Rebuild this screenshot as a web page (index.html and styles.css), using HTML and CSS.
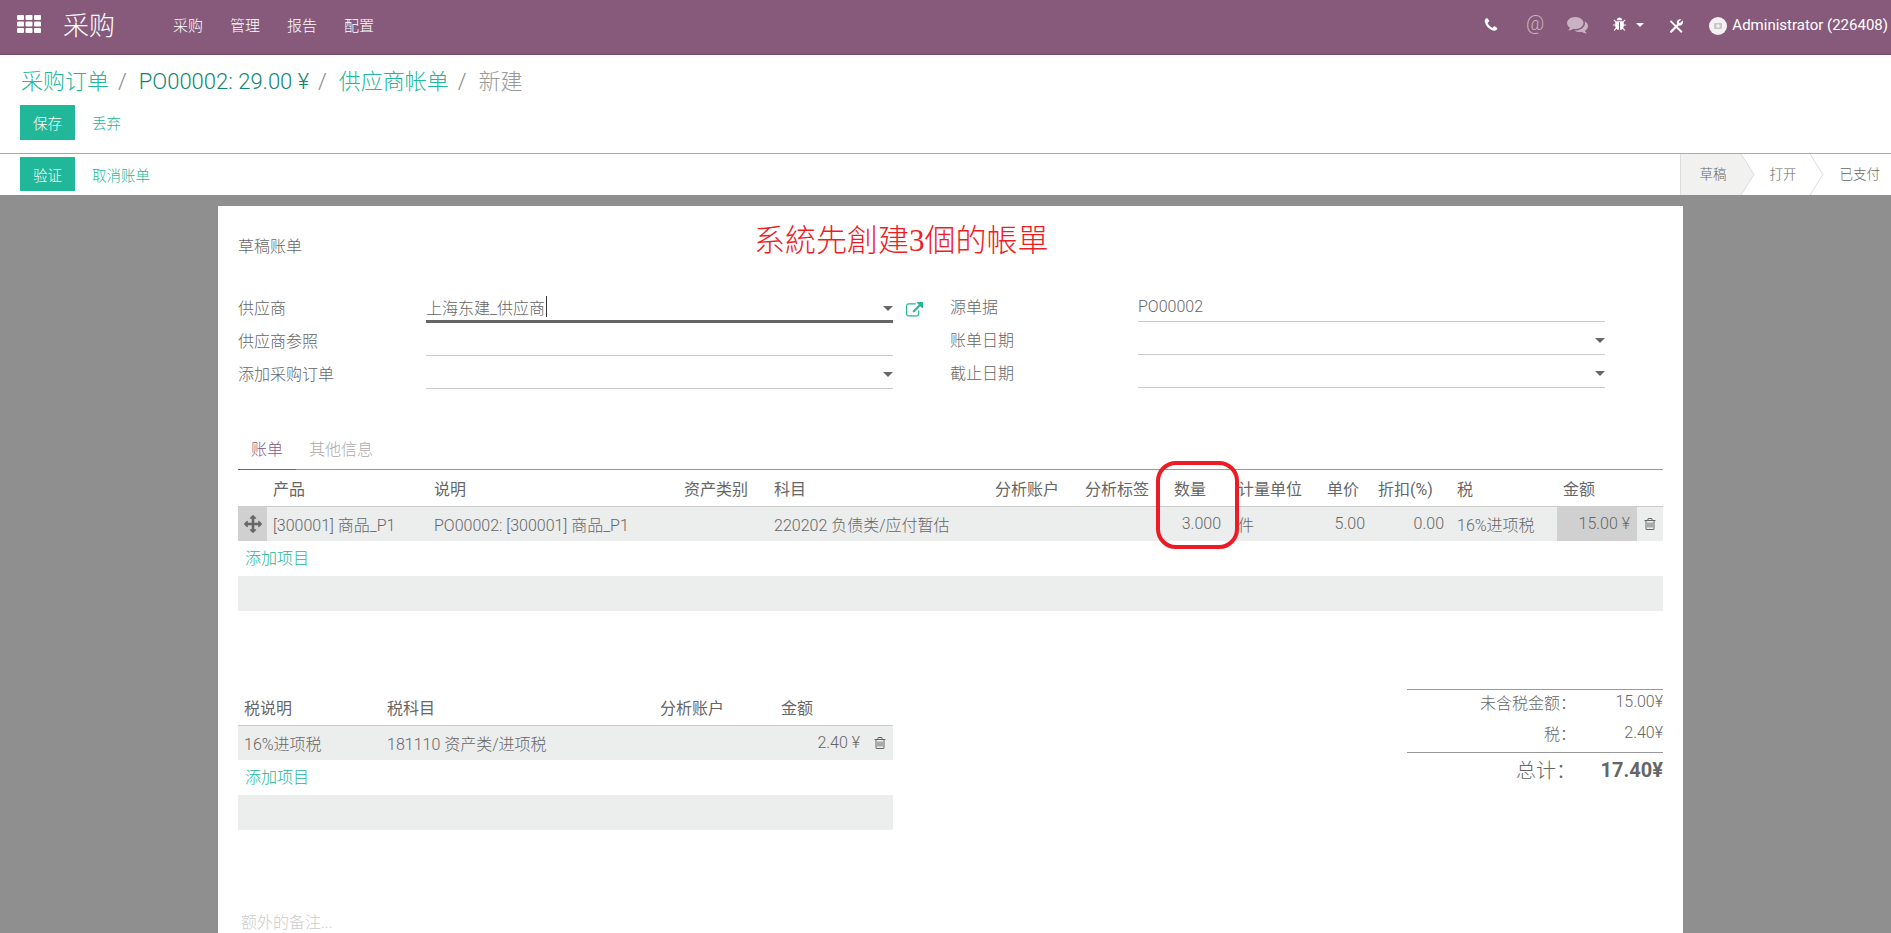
FILE: index.html
```html
<!DOCTYPE html>
<html lang="zh-CN">
<head>
<meta charset="utf-8">
<title>采购</title>
<link rel="stylesheet" href="styles.css">
</head>
<body>
<svg class="sprite" aria-hidden="true">
  <symbol id="i-phone" viewBox="0 0 1792 1792"><path d="M1600 1240q0 27-10 70.5t-21 68.5q-21 50-122 106-94 51-186 51-27 0-53-3.5t-57.5-12.5-47-14.5-55.5-20.5-49-18q-98-35-175-83-127-79-264-216t-216-264q-48-77-83-175-3-9-18-49t-20.5-55.5-14.5-47-12.5-57.5-3.5-53q0-92 51-186 56-101 106-122 25-11 68.5-21t70.5-10q14 0 21 3 18 6 53 76 11 19 30 54t35 63.5 31 53.5q3 4 17.5 25t21.5 35.5 7 28.5q0 20-28.5 50t-62 55-62 53-28.5 46q0 9 5 22.5t8.5 20.5 14 24 11.5 19q76 137 174 235t235 174q2 1 19 11.5t24 14 20.5 8.5 22.5 5q18 0 46-28.5t53-62 55-62 50-28.5q14 0 28.5 7t35.5 21.5 25 17.5q25 15 53.5 31t63.5 35 54 30q70 35 76 53 3 7 3 21z"/></symbol>
  <symbol id="i-comments" viewBox="0 0 1792 1792"><path d="M1408 768q0 139-94 257t-256.500 186.500-353.500 68.500q-86 0-176-16-124 88-278 128-36 9-86 16h-3q-11 0-20.500-8t-11.500-21q-1-3-1-6.500t.5-6.500 2-6l2.500-5 3.500-5.500 4-5 4.500-5 4-4.500q5-6 23-25t26-29.500 22.500-29 25-38.500 20.500-44q-124-72-195-177t-71-224q0-139 94-257t256.500-186.500 353.500-68.500 353.500 68.500 256.500 186.500 94 257zm384 256q0 120-71 224.500t-195 176.500q10 24 20.500 44t25 38.500 22.500 29 26 29.500 23 25q1 1 4 4.500t4.500 5 4 5 3.500 5.500l2.500 5 2 6 .5 6.500-1 6.500q-3 14-13 22t-22 7q-50-7-86-16-154-40-278-128-90 16-176 16-271 0-472-132 58 4 88 4 161 0 309-45t264-129q125-92 192-212t67-254q0-77-23-152 129 71 204 178t75 230z"/></symbol>
  <symbol id="i-bug" viewBox="0 0 1792 1792"><path d="M1696 960q0 26-19 45t-45 19h-224q0 171-67 290l208 209q19 19 19 45t-19 45q-18 19-45 19t-45-19l-198-197q-5 5-15 13t-42 28.500-65 36.500-82 29-97 13v-896h-128v896q-51 0-101.500-13.500t-87-33-66-39-43.500-32.500l-15-14-183 207q-20 21-48 21-24 0-43-16-19-18-20.500-44.500t15.500-46.500l202-227q-58-114-58-274h-224q-26 0-45-19t-19-45 19-45 45-19h224v-294l-173-173q-19-19-19-45t19-45 45-19 45 19l173 173h844l173-173q19-19 45-19t45 19 19 45-19 45l-173 173v294h224q26 0 45 19t19 45zm-480-576h-640q0-133 93.500-226.500t226.500-93.500 226.500 93.500 93.500 226.500z"/></symbol>
  <symbol id="i-external" viewBox="0 0 1792 1792"><path d="M1408 928v320q0 119-84.500 203.500t-203.500 84.500h-832q-119 0-203.500-84.500t-84.500-203.500v-832q0-119 84.500-203.500t203.500-84.500h704q14 0 23 9t9 23v64q0 14-9 23t-23 9h-704q-66 0-113 47t-47 113v832q0 66 47 113t113 47h832q66 0 113-47t47-113v-320q0-14 9-23t23-9h64q14 0 23 9t9 23zm384-864v512q0 26-19 45t-45 19-45-19l-176-176-652 652q-10 10-23 10t-23-10l-114-114q-10-10-10-23t10-23l652-652-176-176q-19-19-19-45t19-45 45-19h512q26 0 45 19t19 45z"/></symbol>
  <symbol id="i-arrows" viewBox="0 0 1792 1792"><path d="M1792 896q0 26-19 45l-256 256q-19 19-45 19t-45-19-19-45v-128h-384v384h128q26 0 45 19t19 45-19 45l-256 256q-19 19-45 19t-45-19l-256-256q-19-19-19-45t19-45 45-19h128v-384h-384v128q0 26-19 45t-45 19-45-19l-256-256q-19-19-19-45t19-45l256-256q19-19 45-19t45 19 19 45v128h384v-384h-128q-26 0-45-19t-19-45 19-45l256-256q19-19 45-19t45 19l256 256q19 19 19 45t-19 45-45 19h-128v384h384v-128q0-26 19-45t45-19 45 19l256 256q19 19 19 45z"/></symbol>
  <symbol id="i-trash" viewBox="0 0 1792 1792"><path d="M704 736v576q0 14-9 23t-23 9h-64q-14 0-23-9t-9-23v-576q0-14 9-23t23-9h64q14 0 23 9t9 23zm256 0v576q0 14-9 23t-23 9h-64q-14 0-23-9t-9-23v-576q0-14 9-23t23-9h64q14 0 23 9t9 23zm256 0v576q0 14-9 23t-23 9h-64q-14 0-23-9t-9-23v-576q0-14 9-23t23-9h64q14 0 23 9t9 23zm128 724v-948h-896v948q0 22 7 40.500t14.500 27 10.500 8.500h832q3 0 10.500-8.500t14.500-27 7-40.500zm-672-1076h448l-48-117q-7-9-17-11h-317q-10 2-17 11zm928 32v64q0 14-9 23t-23 9h-96v948q0 83-47 143.500t-113 60.500h-832q-66 0-113-58.500t-47-141.500v-952h-96q-14 0-23-9t-9-23v-64q0-14 9-23t23-9h309l70-167q15-37 54-63t79-26h320q40 0 79 26t54 63l70 167h309q14 0 23 9t9 23z"/></symbol>
</svg>

<header class="nav">
  <svg class="apps" viewBox="0 0 24 18"><g fill="#fff"><rect width="7" height="5" rx="1"/><rect x="8.500" width="7" height="5" rx="1"/><rect x="17" width="7" height="5" rx="1"/><rect y="6.500" width="7" height="5" rx="1"/><rect x="8.500" y="6.500" width="7" height="5" rx="1"/><rect x="17" y="6.500" width="7" height="5" rx="1"/><rect y="13" width="7" height="5" rx="1"/><rect x="8.500" y="13" width="7" height="5" rx="1"/><rect x="17" y="13" width="7" height="5" rx="1"/></g></svg>
  <span class="brand">采购</span>
  <nav class="menu"><a>采购</a><a>管理</a><a>报告</a><a>配置</a></nav>
  <div class="systray">
    <svg class="ico-phone"><use href="#i-phone"/></svg>
    <span class="at">@</span>
    <svg class="ico-comments"><use href="#i-comments"/></svg>
    <svg class="ico-bug"><use href="#i-bug"/></svg>
    <span class="caret-white"></span>
    <svg class="ico-tools" viewBox="0 0 16 16"><path d="M2.200 1.200 14.400 13.200 13 14.800 .9 2.700z" fill="#fff"/><path d="M14.600 1.400 11.800 4.200 10.800 3.900 10.600 2.800 13 .6C11 -.2 8.700 1 8.400 3.200 8.300 4 8.500 4.700 8.800 5.400L1.200 12.800C.4 13.600 1.900 15.400 3 14.500L10.500 6.900C13.200 7.900 16.200 4.800 14.600 1.400z" fill="#fff"/></svg>
    <svg class="avatar" viewBox="0 0 18 18"><circle cx="9" cy="9" r="9" fill="#f3f1f2"/><rect x="5" y="6" width="8" height="6" rx="1" fill="#c9c6c8"/><circle cx="9" cy="9" r="1.800" fill="#f3f1f2"/></svg>
    <span class="user">Administrator (226408)</span>
  </div>
</header>

<section class="panel">
  <ol class="crumbs">
    <li class="link">采购订单</li><li class="sep">/</li>
    <li class="link-dark">PO00002: 29.00 ¥</li><li class="sep">/</li>
    <li class="link">供应商帐单</li><li class="sep">/</li>
    <li class="current">新建</li>
  </ol>
  <div class="actions"><button class="btn">保存</button><a class="btn-link">丢弃</a></div>
</section>

<section class="statusbar">
  <div class="actions"><button class="btn btn-status">验证</button><a class="btn-link">取消账单</a></div>
  <div class="steps">
    <span class="step step-active">草稿</span>
    <svg class="chev" viewBox="0 0 13 41"><path d="M0 0 13 20.500 0 41z" fill="#f1f1f0"/><path d="M0 0 13 20.500 0 41" fill="none" stroke="#ddd"/></svg>
    <span class="step step-open">打开</span>
    <svg class="chev" viewBox="0 0 13 41"><path d="M0 0 13 20.500 0 41" fill="none" stroke="#ddd"/></svg>
    <span class="step step-paid">已支付</span>
  </div>
</section>

<main class="content">
  <article class="sheet">
    <div class="note-red">系統先創建3個的帳單</div>
    <div class="mark-red"></div>

    <div class="doc-title">草稿账单</div>

    <div class="form">
      <div class="group group-left">
        <div class="row"><label>供应商</label>
          <div class="field field-focus"><span>上海东建_供应商</span><i class="cursor"></i><b class="caret"></b></div>
          <svg class="ico-ext"><use href="#i-external"/></svg>
        </div>
        <div class="row"><label>供应商参照</label><div class="field"></div></div>
        <div class="row"><label>添加采购订单</label><div class="field"><b class="caret"></b></div></div>
      </div>
      <div class="group">
        <div class="row"><label>源单据</label><div class="field"><span>PO00002</span></div></div>
        <div class="row"><label>账单日期</label><div class="field"><b class="caret"></b></div></div>
        <div class="row"><label>截止日期</label><div class="field"><b class="caret"></b></div></div>
      </div>
    </div>

    <div class="tabs"><a class="tab tab-active">账单</a><a class="tab">其他信息</a></div>

    <table class="list">
      <colgroup>
        <col class="c29"><col class="c161"><col class="c250"><col class="c90"><col class="c221"><col class="c90"><col class="c89"><col class="c60"><col class="c93"><col class="c51"><col class="c79"><col class="c106"><col class="c80"><col class="c26">
      </colgroup>
      <thead><tr><th></th><th>产品</th><th>说明</th><th>资产类别</th><th>科目</th><th>分析账户</th><th>分析标签</th><th>数量</th><th class="uom">计量单位</th><th>单价</th><th>折扣(%)</th><th>税</th><th>金额</th><th></th></tr></thead>
      <tbody><tr>
        <td class="handle"><svg class="ico-arrows"><use href="#i-arrows"/></svg></td>
        <td>[300001] 商品_P1</td>
        <td>PO00002: [300001] 商品_P1</td>
        <td></td>
        <td>220202 负债类/应付暂估</td>
        <td></td><td></td>
        <td class="num">3.000</td>
        <td class="uom">件</td>
        <td class="num">5.00</td>
        <td class="num">0.00</td>
        <td>16%进项税</td>
        <td class="num total-cell">15.00 ¥</td>
        <td class="del"><svg class="ico-trash"><use href="#i-trash"/></svg></td>
      </tr></tbody>
    </table>
    <a class="add-line">添加项目</a>
    <div class="filler"></div>

    <div class="bottom">
      <div class="tax">
        <table class="list">
          <colgroup><col class="c143"><col class="c273"><col class="c121"><col class="c92"><col class="c26"></colgroup>
          <thead><tr><th>税说明</th><th>税科目</th><th>分析账户</th><th>金额</th><th></th></tr></thead>
          <tbody><tr>
            <td>16%进项税</td><td>181110 资产类/进项税</td><td></td>
            <td class="num">2.40 ¥</td>
            <td class="del"><svg class="ico-trash"><use href="#i-trash"/></svg></td>
          </tr></tbody>
        </table>
        <a class="add-line">添加项目</a>
        <div class="filler"></div>
      </div>
      <div class="totals">
        <div class="t-row"><span>未含税金额<span class="colon">：</span></span><span class="t-val">15.00¥</span></div>
        <div class="t-row"><span>税<span class="colon">：</span></span><span class="t-val">2.40¥</span></div>
        <div class="t-row t-grand"><span>总计<span class="colon">：</span></span><span class="t-val">17.40¥</span></div>
      </div>
    </div>

    <div class="notes">额外的备注...</div>
  </article>
</main>
</body>
</html>
```

FILE: styles.css
```css
* { box-sizing: border-box; }
html, body { height: 100%; }
body {
  margin: 0;
  height: 933px;
  overflow: hidden;
  display: flex;
  flex-direction: column;
  background: #fff;
  color: #666;
  font-family: Roboto, "Noto Sans CJK SC", sans-serif;
  font-size: 16px;
  font-weight: 300;
}
.sprite { position: absolute; width: 0; height: 0; }
svg { display: block; fill: currentColor; flex: none; }

/* top navigation */
.nav {
  flex: none;
  height: 55px;
  display: flex;
  align-items: center;
  background: #875a7b;
  border-bottom: 1px solid #6d4a64;
  color: #fff;
  padding-left: 17px;
}
.apps { width: 24px; height: 18px; margin-top: -6px; }
.brand { font-size: 26px; line-height: 30px; margin-left: 22px; margin-top: -3px; }
.menu { display: flex; gap: 27px; margin-left: 58px; font-size: 15px; margin-top: -5px; }
.systray { display: flex; align-items: center; margin-left: auto; padding-right: 3px; margin-top: -5px; }
.ico-phone { width: 16px; height: 16px; margin-right: 27px; }
.at { font-size: 20px; line-height: 22px; color: #c9b3c3; margin-top: -4px; margin-right: 23px; }
.ico-comments { width: 21px; height: 21px; color: #c9b3c3; margin-right: 24px; }
.ico-bug { width: 15px; height: 15px; margin-right: 9px; }
.caret-white { width: 0; height: 0; border: 4.5px solid transparent; border-top-color: #fff; border-bottom: 0; margin-right: 25px; }
.ico-tools { width: 15px; height: 15px; margin-right: 25px; margin-top: 3px; }
.avatar { width: 18px; height: 18px; margin-right: 5px; margin-top: 3px; }
.user { font-size: 15px; font-weight: 400; }

/* control panel */
.panel {
  flex: none;
  height: 99px;
  padding: 13px 0 0 20px;
  border-bottom: 1px solid #aaa;
}
.crumbs {
  display: flex;
  list-style: none;
  margin: 0;
  padding: 0 0 0 1px;
  font-size: 22px;
  line-height: 28px;
}
.link { color: #21b799; }
.link-dark { color: #0f8672; }
.current { color: #999; }
.sep { color: #888; margin: 0 12px 0 9px; }
.actions { display: flex; align-items: center; margin-top: 9px; }
.btn {
  width: 55px;
  height: 35px;
  padding: 0;
  border: 0;
  background: #21b799;
  color: #fff;
  font: inherit;
  font-size: 14.500px;
}
.btn-link { color: #21b799; font-size: 14.500px; margin-left: 17px; }

/* status bar */
.statusbar {
  flex: none;
  height: 41px;
  display: flex;
  justify-content: space-between;
  padding-left: 20px;
}
.statusbar .actions { margin-top: 3px; align-self: flex-start; }
.btn-status { height: 34px; }
.steps { display: flex; font-size: 13.500px; line-height: 41px; }
.step { display: block; }
.step-active { background: #f1f1f0; border-left: 1px solid #ddd; padding: 0 14px 0 19px; }
.step-open { padding: 0 13px 0 16px; }
.step-paid { padding: 0 11px 0 17px; }
.chev { width: 13px; height: 41px; overflow: visible; }

/* sheet */
.content {
  flex: 1;
  min-height: 0;
  overflow: hidden;
  background: #8f8f8f;
  padding: 11px 0 0 218px;
}
.sheet {
  position: relative;
  width: 1465px;
  height: 800px;
  background: #fff;
  padding: 29px 20px 0;
}
.note-red {
  position: absolute;
  left: 536px;
  top: 15px;
  font-family: "Liberation Serif", "Noto Sans CJK TC", serif;
  font-size: 31px;
  line-height: 40px;
  color: #f01c24;
  white-space: nowrap;
}
.mark-red {
  position: absolute;
  left: 938px;
  top: 255px;
  width: 83px;
  height: 88px;
  border: 4px solid #ed1c24;
  border-radius: 20px;
}
.doc-title { line-height: 24px; margin-bottom: 30px; }

/* form */
.form { display: flex; gap: 57px; height: 100px; }
.group { width: 655px; }
.group-left { padding-top: 1px; }
.row { display: flex; align-items: center; height: 33px; position: relative; }
.row label { width: 188px; flex: none; }
.field {
  position: relative;
  flex: 1;
  height: 33px;
  display: flex;
  align-items: center;
  padding-top: 3px;
  border-bottom: 1px solid #ccc;
}
.field-focus { border-bottom: 3px solid #666; }
.cursor { width: 1px; height: 21px; background: #333; margin-left: 1px; }
.caret {
  position: absolute;
  right: 0;
  top: 16px;
  border: 5px solid transparent;
  border-top-color: #666;
  border-bottom: 0;
}
.ico-ext { position: absolute; left: 668px; top: 12px; width: 17px; height: 17px; color: #21b799; }

/* tabs */
.tabs { display: flex; height: 39px; margin-top: 42px; border-bottom: 1px solid #999; }
.tab { height: 39px; line-height: 38px; padding: 0 13px; color: #aaa; }
.tab-active { color: #875a7b; border-bottom: 1px solid #875a7b; }

/* list tables */
.list { width: 100%; table-layout: fixed; border-collapse: collapse; }
.list th {
  height: 36px;
  padding: 0 6px;
  text-align: left;
  font-weight: 400;
  color: #666;
  border-bottom: 1px solid #ccc;
  white-space: nowrap;
}
.list td { height: 35px; padding: 0 7px 0 6px; background: #eceded; white-space: nowrap; }
.list .uom { padding-left: 10px; }
.list .num { text-align: right; }
.list .total-cell { background: #d0d0d0; }
.list .handle { padding: 0; background: #d0d0d0; }
.list .del { padding: 0; }
.ico-arrows { width: 18px; height: 18px; margin: 0 auto; }
.ico-trash { width: 14px; height: 14px; margin: 0 auto; }
.c29 { width: 29px; } .c161 { width: 161px; } .c250 { width: 250px; } .c90 { width: 90px; }
.c221 { width: 221px; } .c89 { width: 89px; } .c60 { width: 60px; } .c93 { width: 93px; }
.c51 { width: 51px; } .c79 { width: 79px; } .c106 { width: 106px; } .c80 { width: 80px; }
.c26 { width: 26px; } .c143 { width: 143px; } .c273 { width: 273px; } .c121 { width: 121px; } .c92 { width: 92px; }
.add-line { display: block; height: 35px; line-height: 35px; padding-left: 7px; color: #21b799; }
.filler { height: 35px; background: #eceded; }

/* bottom */
.bottom { display: flex; justify-content: space-between; margin-top: 78px; }
.tax { width: 655px; }
.totals { width: 256px; border-top: 1px solid #999; }
.t-row { display: grid; grid-template-columns: 1fr 87px; text-align: right; line-height: 24px; margin-bottom: 5px; }
.t-row:nth-child(2) { border-bottom: 1px solid #999; padding-bottom: 5px; margin-bottom: 0; }
.t-grand { font-size: 20px; line-height: 34px; margin: 0; }
.t-grand .t-val { font-weight: 700; }
.colon { font-family: "Noto Sans CJK TC", sans-serif; }
.notes { margin-top: 81px; padding-left: 3px; line-height: 24px; color: #ccc; }
```
